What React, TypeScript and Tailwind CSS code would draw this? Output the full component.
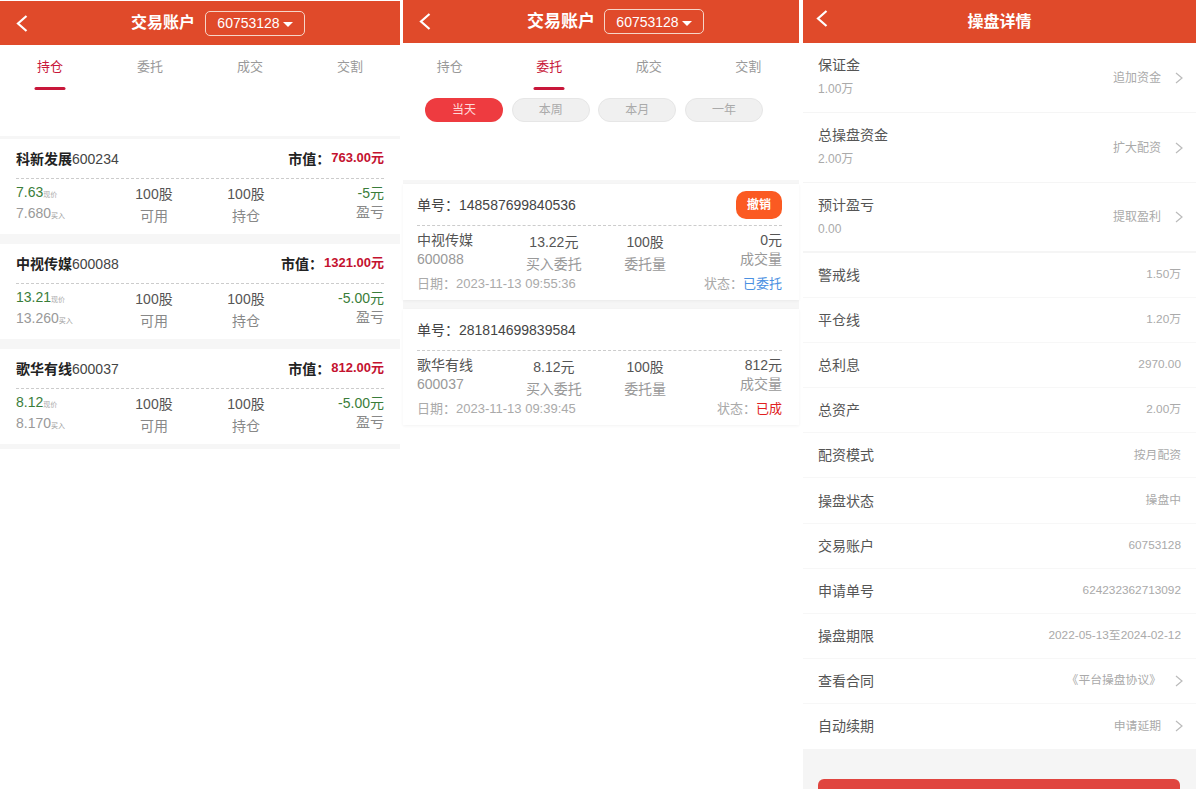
const tabs = ["持仓", "委托", "成交", "交割"]
const ranges = ["当天", "本周", "本月", "一年"]

const positions = [
  { name: "科新发展", code: "600234", value: "763.00元", now: "7.63", buy: "7.680", pnl: "-5元" },
  { name: "中视传媒", code: "600088", value: "1321.00元", now: "13.21", buy: "13.260", pnl: "-5.00元" },
  { name: "歌华有线", code: "600037", value: "812.00元", now: "8.12", buy: "8.170", pnl: "-5.00元" },
]

const orders = [
  { no: "148587699840536", name: "中视传媒", code: "600088", price: "13.22元", done: "0元", date: "2023-11-13 09:55:36", status: "已委托", color: "text-[#4a90e2]", cancel: true },
  { no: "281814699839584", name: "歌华有线", code: "600037", price: "8.12元", done: "812元", date: "2023-11-13 09:39:45", status: "已成", color: "text-[#e02020]", cancel: false },
]

const topRows = [
  { label: "保证金", value: "1.00万", action: "追加资金" },
  { label: "总操盘资金", value: "2.00万", action: "扩大配资" },
  { label: "预计盈亏", value: "0.00", action: "提取盈利" },
]

const rows = [
  { label: "警戒线", value: "1.50万" },
  { label: "平仓线", value: "1.20万" },
  { label: "总利息", value: "2970.00" },
  { label: "总资产", value: "2.00万" },
  { label: "配资模式", value: "按月配资" },
  { label: "操盘状态", value: "操盘中" },
  { label: "交易账户", value: "60753128" },
  { label: "申请单号", value: "624232362713092" },
  { label: "操盘期限", value: "2022-05-13至2024-02-12" },
  { label: "查看合同", value: "《平台操盘协议》", arrow: true },
  { label: "自动续期", value: "申请延期", arrow: true },
]

function Back() {
  return (
    <svg width="12" height="17" viewBox="0 0 12 17" fill="none" stroke="white" strokeWidth="2.2" className="shrink-0">
      <polyline points="10.5,1 2,8.5 10.5,16" />
    </svg>
  )
}

function Arrow({ className }: { className: string }) {
  return (
    <svg width="8" height="12" viewBox="0 0 8 12" fill="none" stroke="#bbbbbb" strokeWidth="1.2" className={className}>
      <polyline points="1,1 7,6 1,11" />
    </svg>
  )
}

function Account({ className, titleClass }: { className: string; titleClass: string }) {
  return (
    <div className={`flex items-center text-white ${className}`}>
      <span className={`font-bold ${titleClass}`}>交易账户</span>
      <span className="ml-[10px] flex h-[25px] w-[100px] items-center justify-center rounded-[5px] border border-[#f6d5c8] text-sm">
        60753128
        <span className="ml-[3px] mt-[3px] border-x-[5px] border-t-[5px] border-x-transparent border-t-white"></span>
      </span>
    </div>
  )
}

function Tabs({ active }: { active: number }) {
  return (
    <div className="grid h-[45px] grid-cols-4">
      {tabs.map((t, i) => (
        <div key={t} className={`relative flex justify-center pt-[12px] text-[13px] ${i === active ? "text-[#c8173a]" : "text-[#999999]"}`}>
          {t}
          {i === active && <span className="absolute bottom-0 left-1/2 h-[3px] w-[31px] -translate-x-1/2 rounded-full bg-[#c8173a]"></span>}
        </div>
      ))}
    </div>
  )
}

function PositionCard({ item }: { item: (typeof positions)[number] }) {
  return (
    <div className="h-[95px] bg-white px-4">
      <div className="flex h-[40px] items-center justify-between border-b border-dashed border-[#cccccc] text-sm text-[#444444]">
        <div>
          <span className="font-bold text-[#222222]">{item.name}</span>
          {item.code}
        </div>
        <div className="flex items-center font-bold text-[#222222]">
          <span className="mr-[1px]">市值：</span>
          <span className="text-[13px] text-[#c4122f]">{item.value}</span>
        </div>
      </div>
      <div className="grid grid-cols-4 pt-[4px] text-sm leading-[19px]">
        <div>
          <div className="text-[#3a7d3a]">
            {item.now}
            <span className="text-[7px] text-[#aaaaaa]">现价</span>
          </div>
          <div className="text-[#999999]">
            {item.buy}
            <span className="text-[7px]">买入</span>
          </div>
        </div>
        <div className="pt-[2px] text-center text-[#555555]">
          100股
          <div className="mt-[3px] text-[#888888]">可用</div>
        </div>
        <div className="pt-[2px] text-center text-[#555555]">
          100股
          <div className="mt-[3px] text-[#888888]">持仓</div>
        </div>
        <div className="pt-[1px] text-right text-[#3a7d3a]">
          {item.pnl}
          <div className="text-[#888888]">盈亏</div>
        </div>
      </div>
    </div>
  )
}

function OrderCard({ item }: { item: (typeof orders)[number] }) {
  return (
    <div className="h-[116px] bg-white pl-[14px] pr-[17px] shadow-[0_1px_3px_rgba(0,0,0,0.05)]">
      <div className="flex h-[42px] items-center justify-between border-b border-dashed border-[#cccccc] pt-[1px] text-sm text-[#444444]">
        <span>单号：{item.no}</span>
        {item.cancel && (
          <span className="flex h-[28px] w-[46px] items-center justify-center rounded-[10px] bg-[#fb5a22] text-xs font-bold text-white">撤销</span>
        )}
      </div>
      <div className="grid grid-cols-4 pt-[5px] text-sm leading-[19px]">
        <div>
          <div className="text-[#555555]">{item.name}</div>
          <div className="text-[#999999]">{item.code}</div>
        </div>
        <div className="pt-[2px] text-center text-[#555555]">
          {item.price}
          <div className="mt-[3px] text-[#999999]">买入委托</div>
        </div>
        <div className="pt-[2px] text-center text-[#555555]">
          100股
          <div className="mt-[3px] text-[#999999]">委托量</div>
        </div>
        <div className="text-right text-[#555555]">
          {item.done}
          <div className="text-[#999999]">成交量</div>
        </div>
      </div>
      <div className="flex justify-between text-[13px] leading-[19px] text-[#aaaaaa]">
        <span>日期：{item.date}</span>
        <span>
          状态：<span className={item.color}>{item.status}</span>
        </span>
      </div>
    </div>
  )
}

export default function App() {
  return (
    <div className="flex h-[789px] w-[1196px] overflow-hidden bg-white [font-family:'Liberation_Sans','Noto_Sans_CJK_SC',sans-serif]">
      {/* left: holdings */}
      <div className="w-[400px]">
        <div className="mt-px flex h-[44px] items-center bg-[#e04a2a] pl-[16px]">
          <Back />
          <Account className="ml-[103px]" titleClass="text-base" />
        </div>
        <Tabs active={0} />
        <div className="mt-[46px] flex flex-col gap-[10px] border-b-[5px] border-t-[3px] border-[#f6f6f6] bg-[#f6f6f6]">
          {positions.map((p) => (
            <PositionCard key={p.code} item={p} />
          ))}
        </div>
      </div>

      {/* middle: orders */}
      <div className="ml-[3px] w-[396px]">
        <div className="flex h-[43px] items-center bg-[#e04a2a] pl-[16px]">
          <Back />
          <Account className="ml-[96px]" titleClass="text-[17px] -mr-[1px]" />
        </div>
        <div className="-ml-[3px] mt-[2px] w-[398px]">
          <Tabs active={1} />
        </div>
        <div className="mt-[8px] flex gap-[8.67px] pl-[22px]">
          {ranges.map((r, i) => (
            <span
              key={r}
              className={`flex h-[24px] w-[78px] items-center justify-center rounded-full text-xs ${
                i === 0 ? "bg-[#ee3b40] text-[#ffd9d9]" : "border border-[#e6e6e6] bg-[#f0f0f0] text-[#aaaaaa]"
              }`}
            >
              {r}
            </span>
          ))}
        </div>
        <div className="mt-[58px] flex flex-col gap-[9px] border-t-[4px] border-[#f6f6f6] bg-[#f6f6f6]">
          {orders.map((o) => (
            <OrderCard key={o.no} item={o} />
          ))}
        </div>
      </div>

      {/* right: detail */}
      <div className="ml-[4px] flex w-[393px] flex-col bg-[#f5f5f5]">
        <div className="relative flex h-[43px] shrink-0 items-center justify-center bg-[#e04a2a] text-base font-bold text-white">
          <span className="absolute left-[13px] top-[10px]">
            <Back />
          </span>
          操盘详情
        </div>
        <div className="shrink-0 bg-white">
          {topRows.map((r, i) => (
            <div key={r.label} className={`flex h-[70px] items-center justify-between border-[#f5f5f5] pl-[15px] pr-[13px] ${i === 2 ? "border-b-2" : "border-b"}`}>
              <div className="-mt-[3px]">
                <div className="text-sm leading-[20px] text-[#555555]">{r.label}</div>
                <div className="mt-[6px] text-xs leading-[16px] text-[#aaaaaa]">{r.value}</div>
              </div>
              <div className="flex items-center text-xs text-[#aaaaaa]">
                {r.action}
                <Arrow className="ml-[14px]" />
              </div>
            </div>
          ))}
          {rows.map((r) => (
            <div key={r.label} className="flex h-[45.1px] items-center justify-between border-b border-[#f7f7f7] px-[15px] last:border-b-0">
              <span className="text-sm text-[#555555]">{r.label}</span>
              <span className="flex items-center text-[11.8px] text-[#aaaaaa]">
                {r.value}
                {r.arrow && <Arrow className="-mr-[2px] ml-[14px]" />}
              </span>
            </div>
          ))}
        </div>
        <div className="ml-[15px] mr-[16px] mt-[30px] h-[40px] shrink-0 rounded-[6px] bg-[#e0453f]"></div>
      </div>
    </div>
  )
}
